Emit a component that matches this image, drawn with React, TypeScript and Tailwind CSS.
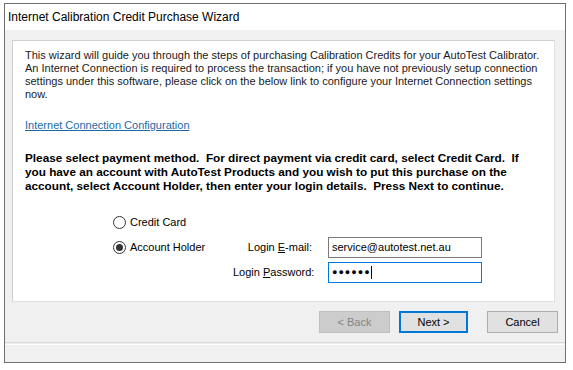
import React from "react";

export default function App() {
  const tah = { fontFamily: '"Liberation Sans", Arial, sans-serif' };
  return (
    <div className="w-[573px] h-[370px] bg-white pt-[3px] pl-[4px] overflow-hidden" style={tah}>
      <div className="w-[562px] h-[360px] border border-[#6f6f6f] flex flex-col">
        <div className="h-[26px] bg-white flex items-center px-[3px] text-[12px] text-black">
          Internet Calibration Credit Purchase Wizard
        </div>
        <div className="flex-1 bg-[#f0f0f0] flex flex-col">
          <div className="mt-[10px] ml-[7px] w-[543px] h-[262px] bg-white border-t border-l border-[#cfcfcf] border-r border-r-[#e0e0e0] border-b border-b-[#e0e0e0] pl-[12px] pr-[8px] pt-[8px]">
            <p className="text-[11px] leading-[13px] text-[#1a1a1a]">
              This wizard will guide you through the steps of purchasing Calibration Credits for your AutoTest Calibrator.
              An Internet Connection is required to process the transaction; if you have not previously setup connection
              settings under this software, please click on the below link to configure your Internet Connection settings
              now.
            </p>
            <div className="mt-[18px] text-[11px] leading-[13px] text-[#1c6aa8] underline">
              Internet Connection Configuration
            </div>
            <p className="mt-[19px] text-[11.75px] leading-[14px] font-bold text-black whitespace-nowrap">
              Please select payment method.&nbsp; For direct payment via credit card, select Credit Card.&nbsp; If
              <br />
              you have an account with AutoTest Products and you wish to put this purchase on the
              <br />
              account, select Account Holder, then enter your login details.&nbsp; Press Next to continue.
            </p>
            <div className="mt-[22px] flex text-[11px] text-black">
              <div className="ml-[88px] flex flex-col gap-[11px] w-[120px]">
                <div className="flex items-center gap-[4px] h-[14px]">
                  <span className="w-[13px] h-[13px] rounded-full border border-[#333] bg-white" />
                  <span>Credit Card</span>
                </div>
                <div className="flex items-center gap-[4px] h-[14px]">
                  <span className="w-[13px] h-[13px] rounded-full border border-[#333] bg-white flex items-center justify-center">
                    <span className="w-[7px] h-[7px] rounded-full bg-[#333]" />
                  </span>
                  <span>Account Holder</span>
                </div>
              </div>
              <div className="mt-[22px] grid grid-cols-[79px_154px] gap-x-[16px] gap-y-[4px] items-center">
                <div className="text-right whitespace-nowrap">
                  Login <span className="underline">E</span>-mail:
                </div>
                <div className="h-[21px] border border-[#7a7a7a] bg-white flex items-center px-[3px]">
                  service@autotest.net.au
                </div>
                <div className="text-right whitespace-nowrap">
                  Login <span className="underline">P</span>assword:
                </div>
                <div className="h-[21px] border border-[#0078d7] bg-white flex items-center px-[3px]">
                  <span className="tracking-[1px] text-[9px]">●●●●●●</span>
                  <span className="w-px h-[13px] bg-black" />
                </div>
              </div>
            </div>
          </div>
          <div className="mt-[9px] flex justify-end pr-[7px] text-[11px]">
            <div className="w-[71px] h-[22px] bg-[#cccccc] border border-[#bfbfbf] text-[#838383] flex items-center justify-center">
              &lt; Back
            </div>
            <div className="ml-[9px] w-[69px] h-[22px] bg-[#e1e1e1] border-2 border-[#0078d7] text-black flex items-center justify-center">
              Next &gt;
            </div>
            <div className="ml-[19px] w-[71px] h-[22px] bg-[#e1e1e1] border border-[#adadad] text-black flex items-center justify-center">
              Cancel
            </div>
          </div>
          <div className="mt-[9px] border-t border-[#d9d9d9] border-b border-b-white h-[3px]" />
        </div>
      </div>
    </div>
  );
}
